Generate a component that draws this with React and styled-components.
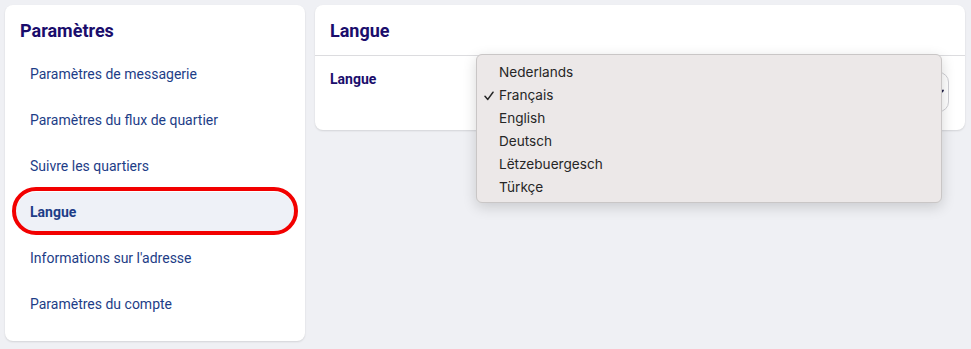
import React from "react";
import styled, { createGlobalStyle } from "styled-components";

const Global = createGlobalStyle`
  html, body { margin: 0; padding: 0; }
  body {
    background: #eff0f4;
    font-family: Roboto, "Noto Sans", Arial, sans-serif;
  }
`;

const Page = styled.div`
  display: flex;
  gap: 10px;
  padding: 5px 6px 5px 5px;
  align-items: flex-start;
`;

const Card = styled.div`
  background: #ffffff;
  border-radius: 8px;
  box-shadow: 0 1px 2px rgba(0, 0, 0, 0.12);
  position: relative;
`;

const Sidebar = styled(Card)`
  width: 300px;
  height: 336px;
  box-sizing: border-box;
  padding: 16px 11px 0 11px;
`;

const SideTitle = styled.h2`
  margin: 0 0 13px 4px;
  font-size: 18px;
  line-height: 20px;
  font-weight: 700;
  color: #1a0d6c;
`;

const NavList = styled.div`
  display: flex;
  flex-direction: column;
  gap: 6px;
`;

const NavItem = styled.div`
  position: relative;
  height: 40px;
  display: flex;
  align-items: center;
  padding-left: 14px;
  border-radius: 20px;
  font-size: 14px;
  color: #1d3d87;
  font-weight: ${(p) => (p.$active ? 700 : 400)};
  background: ${(p) => (p.$active ? "#eef1f7" : "transparent")};
`;

const Annotation = styled.div`
  position: absolute;
  left: -4px;
  right: -4px;
  top: -5px;
  bottom: -3px;
  border: 4px solid #f20000;
  border-radius: 25px;
  pointer-events: none;
`;

const Main = styled(Card)`
  flex: 1;
`;

const MainHeader = styled.div`
  height: 51px;
  box-sizing: border-box;
  padding: 16px 15px 0 15px;
  border-bottom: 1px solid #dcdcdf;
`;

const MainTitle = styled.h2`
  margin: 0;
  font-size: 18px;
  line-height: 20px;
  font-weight: 700;
  color: #1a0d6c;
`;

const FieldRow = styled.div`
  display: grid;
  grid-template-columns: 146px 1fr;
  padding: 16px 16px 18px 15px;
`;

const FieldLabel = styled.div`
  font-size: 14px;
  line-height: 14px;
  font-weight: 700;
  color: #1a0d6c;
`;

const SelectBox = styled.div`
  height: 40px;
  box-sizing: border-box;
  border: 1px solid #cfcfd4;
  border-radius: 10px;
  display: flex;
  align-items: center;
  justify-content: flex-end;
  padding-right: 3px;
  color: #23234a;
`;

const Dropdown = styled.div`
  position: absolute;
  left: 161px;
  top: 49px;
  width: 466px;
  height: 149px;
  box-sizing: border-box;
  background: #ece8e8;
  border: 1px solid #c9c6c6;
  border-radius: 6px;
  box-shadow: 0 4px 14px rgba(0, 0, 0, 0.16);
  padding: 6px 0 4px;
  font-family: Inter, "Noto Sans", sans-serif;
`;

const Option = styled.div`
  position: relative;
  height: 23px;
  line-height: 23px;
  padding-left: 22px;
  font-size: 13.6px;
  color: #262626;
`;

const Check = styled.svg`
  position: absolute;
  left: 7px;
  top: 7px;
`;

const languages = ["Nederlands", "Français", "English", "Deutsch", "Lëtzebuergesch", "Türkçe"];
const navItems = [
  "Paramètres de messagerie",
  "Paramètres du flux de quartier",
  "Suivre les quartiers",
  "Langue",
  "Informations sur l'adresse",
  "Paramètres du compte",
];

export default function App() {
  return (
    <>
      <Global />
      <Page>
        <Sidebar>
          <SideTitle>Paramètres</SideTitle>
          <NavList>
            {navItems.map((item) => (
              <NavItem key={item} $active={item === "Langue"}>
                {item}
                {item === "Langue" && <Annotation />}
              </NavItem>
            ))}
          </NavList>
        </Sidebar>
        <Main>
          <MainHeader>
            <MainTitle>Langue</MainTitle>
          </MainHeader>
          <FieldRow>
            <FieldLabel>Langue</FieldLabel>
            <SelectBox>
              <svg width="10" height="10" viewBox="0 0 10 10">
                <path d="M2 3.5 L5 6.5 L8 3.5" fill="none" stroke="currentColor" strokeWidth="1.8" strokeLinecap="round" strokeLinejoin="round" />
              </svg>
            </SelectBox>
          </FieldRow>
          <Dropdown>
            {languages.map((l) => (
              <Option key={l}>
                {l === "Français" && (
                  <Check width="10" height="10" viewBox="0 0 10 10">
                    <path d="M1 5.2 L3.8 8.4 L9 1.2" fill="none" stroke="#262626" strokeWidth="1.5" strokeLinecap="round" strokeLinejoin="round" />
                  </Check>
                )}
                {l}
              </Option>
            ))}
          </Dropdown>
        </Main>
      </Page>
    </>
  );
}
